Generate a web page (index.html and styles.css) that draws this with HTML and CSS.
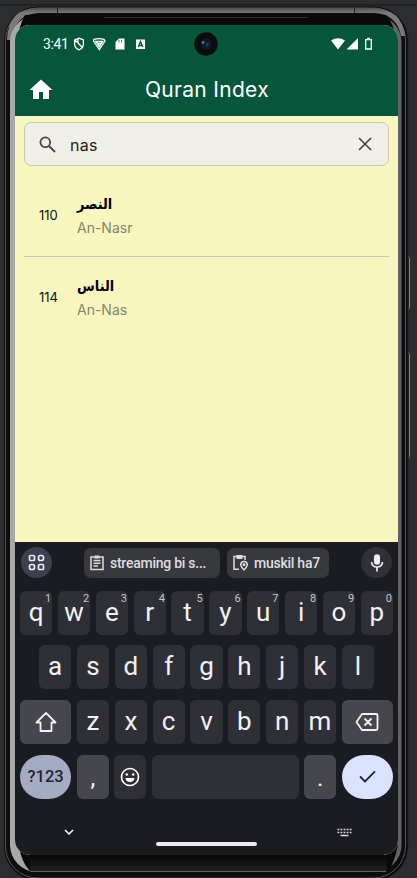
FILE: index.html
```
<!DOCTYPE html>
<html lang="en">
<head>
<meta charset="utf-8">
<title>Quran Index</title>
<link rel="stylesheet" href="styles.css">
</head>
<body>
<div class="stage">
<svg class="frame" width="417" height="878" viewBox="0 0 417 878">
  <defs>
    <linearGradient id="side" x1="0" x2="1"><stop offset="0" stop-color="#aaa"/><stop offset=".3" stop-color="#777"/><stop offset="1" stop-color="#626362"/></linearGradient>
    <linearGradient id="foot" x1="0" y1="0" x2="0" y2="1"><stop offset="0" stop-color="#060606"/><stop offset="1" stop-color="#202020"/></linearGradient>
    <linearGradient id="cap" gradientUnits="userSpaceOnUse" x1="0" y1="7" x2="0" y2="13"><stop offset="0" stop-color="#484848"/><stop offset="1" stop-color="#7a7a7a"/></linearGradient>
  </defs>
  <rect y="4" width="417" height="1.500" fill="#1e1f22"/>
  <rect x="406" y="257" width="3.500" height="52" rx="1.500" fill="#222" stroke="#85857f"/>
  <rect x="406" y="353" width="3.500" height="105" rx="1.500" fill="#222" stroke="#85857f"/>
  <rect x="4" y="6.500" width="404" height="874" rx="34" fill="#0d0d0e"/>
  <rect x="5.500" y="8" width="400" height="870" rx="32" fill="none" stroke="#565653"/>
  <path d="M7 40Q8 8 38 8H374Q402 9 405 36L401 36Q397 14 374 13H38Q15 14 11 40Z" fill="url(#cap)"/>
  <path d="M57.500 8v5M354.500 8v5" stroke="#222"/>
  <rect x="10" y="15" width="391.500" height="857" rx="27" fill="url(#side)"/>
  <path d="M25 15H386Q393 22 395 36H18Q20 24 25 15ZM16 845H398Q394 864 388 871H30Q21 862 19 845Z" fill="#090909"/>
  <rect x="30" y="854" width="357" height="17" fill="url(#foot)"/>
  <path d="M30 871.500H386" stroke="#62625e"/>
  <path d="M104 17.500H308" stroke="#333"/>
  <path d="M408 36V845" stroke="#1d1e20"/>
</svg>
<main class="screen">
  <header class="appbar">
    <div class="status">
      <span class="clock">3:41</span>
      <svg class="st-icons" width="74" height="14" viewBox="0 0 74 14" fill="none" stroke="#fff" stroke-width="1.300">
        <path d="M6 1.200 10.400 3v4Q10.400 11 6 12.800 1.600 11 1.600 7V3ZM2 3l8 8M5 2v4l3 3"/>
        <path d="M21 2.300Q26 .8 31 2.300L32 4 26.300 12.500 20.500 4Z"/><path d="M23 4.500h6.500L26.300 9.500ZM24 6.500h5" stroke-width="1.500"/>
        <path d="M46 1.500h5.500V12.500h-9V5Z" fill="#fff" stroke="none"/><path d="M46 3v2.500M48.500 3v2.500" stroke="#06563c" stroke-width=".8"/>
        <rect x="63" y="2.500" width="9" height="9.500" fill="#fff" stroke="none"/><path d="M65.200 10 67.500 4.500 69.800 10M66 8.500h3" stroke="#06563c"/>
      </svg>
      <svg class="camera" width="24" height="24" viewBox="0 0 24 24"><circle cx="12" cy="12" r="11.700" fill="#0b0c0e"/><circle cx="12" cy="12" r="6" fill="#11151c"/><circle cx="12" cy="12" r="3.500" fill="#10203c"/><circle cx="9" cy="10.500" r="1.200" fill="#76819a"/><circle cx="13.500" cy="12.500" r="1.100" fill="#24588a"/></svg>
      <svg class="signals" width="43" height="14" viewBox="0 0 43 14"><path d="M1 3.500Q8-.8 15 3.500L8 12.500ZM28 1v11.500H16.500Z" fill="#fff"/><path d="M35.700 2.700h5.600v9.300h-5.600Z" fill="none" stroke="#fff" stroke-width="1.300"/><path d="M37 .8h3V3h-3Z" fill="#fff"/></svg>
    </div>
    <div class="titlebar">
      <svg class="home" width="24" height="21" viewBox="0 0 24 21"><path d="M12 .5 23.500 11H20v9h-6v-7h-4v7H4v-9H.5Z" fill="#fff"/></svg>
      <h1>Quran Index</h1>
    </div>
  </header>
  <section class="content">
    <div class="search">
      <svg width="17" height="17" viewBox="0 0 17 17" fill="none" stroke="#49454f" stroke-width="1.800"><circle cx="6.300" cy="6.300" r="4.900"/><path d="m10 10 6 6"/></svg>
      <span>nas</span>
      <svg width="14" height="14" viewBox="0 0 14 14" stroke="#49454f" stroke-width="1.700"><path d="m1 1 12 12M13 1 1 13"/></svg>
    </div>
    <article class="sura"><b>110</b><div><h2 lang="ar" dir="rtl">النصر</h2><p>An-Nasr</p></div></article>
    <article class="sura"><b>114</b><div><h2 lang="ar" dir="rtl">الناس</h2><p>An-Nas</p></div></article>
  </section>
  <section class="keyboard">
    <div class="suggest">
      <span class="round tools"><svg width="17" height="17" viewBox="0 0 17 17" fill="none" stroke="#e9ebf5" stroke-width="1.700"><rect x="1.500" y="1.500" width="5" height="5" rx="1"/><rect x="10.500" y="1.500" width="5" height="5" rx="2"/><rect x="1.500" y="10.500" width="5" height="5" rx="2"/><rect x="10.500" y="10.500" width="5" height="5" rx="1"/></svg></span>
      <span class="chip first"><svg width="14" height="17" viewBox="0 0 14 17" fill="none" stroke="#ddd" stroke-width="1.500"><path d="M1 3h12v12.500H1ZM3.500 6.500h7M3.500 9.300h7M3.500 12h4.500"/><path d="M4.500 1.500h5v3h-5Z" fill="#ddd" stroke="none"/></svg><em>streaming bi s...</em></span>
      <span class="chip next"><svg width="15" height="17" viewBox="0 0 15 17" fill="none" stroke="#ddd" stroke-width="1.500"><path d="M6 15.200H1V2.500h11V6"/><path d="M3.500 1h6v4h-6Z" fill="#ddd" stroke="none"/><path d="M11 15.800Q7.800 12.500 7.800 10.700a3.200 3.200 0 0 1 6.400 0Q14.200 12.500 11 15.800Z"/><circle cx="11" cy="10.700" r=".7"/></svg><em>muskil ha7</em></span>
      <span class="round mic"><svg width="14" height="18" viewBox="0 0 14 18" fill="none" stroke="#eee" stroke-width="1.700"><rect x="4.800" y="1" width="4.400" height="9" rx="2.200" fill="#eee"/><path d="M1.500 8q.5 5 5.500 5t5.500-5M7 13v4.500"/></svg></span>
    </div>
    <div class="row"><span class="key">q<sup>1</sup></span><span class="key">w<sup>2</sup></span><span class="key">e<sup>3</sup></span><span class="key">r<sup>4</sup></span><span class="key">t<sup>5</sup></span><span class="key">y<sup>6</sup></span><span class="key">u<sup>7</sup></span><span class="key">i<sup>8</sup></span><span class="key">o<sup>9</sup></span><span class="key">p<sup>0</sup></span></div>
    <div class="row middle"><span class="key">a</span><span class="key">s</span><span class="key">d</span><span class="key">f</span><span class="key">g</span><span class="key">h</span><span class="key">j</span><span class="key">k</span><span class="key">l</span></div>
    <div class="row"><span class="key wide light"><svg width="22" height="22" viewBox="0 0 22 22" fill="none" stroke="#f2f1f6" stroke-width="1.800" stroke-linejoin="round"><path d="M11 1.800 20.500 11.500H16.500V20h-11v-8.500H1.500Z"/></svg></span><span class="key">z</span><span class="key">x</span><span class="key">c</span><span class="key">v</span><span class="key">b</span><span class="key">n</span><span class="key">m</span><span class="key wide light"><svg width="24" height="20" viewBox="0 0 24 20" fill="none" stroke="#f2f1f6" stroke-width="1.800" stroke-linejoin="round"><path d="M7 2h14q1.500 0 1.500 1.500v13Q22.500 18 21 18H7L1.500 10ZM9.500 6.500l7 7M16.500 6.500l-7 7"/></svg></span></div>
    <div class="row"><span class="key wide symbols">?123</span><span class="key light punct">,</span><span class="key"><svg width="20" height="20" viewBox="0 0 20 20"><circle cx="10" cy="10" r="8.500" fill="none" stroke="#fff" stroke-width="1.600"/><path d="M5.500 11h9Q14 15 10 15t-4.500-4" fill="#fff"/><circle cx="6.800" cy="7.500" r="1.200" fill="#fff"/><circle cx="13.200" cy="7.500" r="1.200" fill="#fff"/></svg></span><span class="key space"></span><span class="key light punct">.</span><span class="key wide enter"><svg width="17" height="13" viewBox="0 0 17 13" fill="none" stroke="#20242e" stroke-width="1.800"><path d="m1 6.500 5 5L16 1.300"/></svg></span></div>
    <div class="nav">
      <svg width="10" height="7" viewBox="0 0 10 7" fill="none" stroke="#fff" stroke-width="1.500"><path d="m1 1 4 4 4-4"/></svg>
      <i></i>
      <svg width="15" height="9" viewBox="0 0 15 9" stroke="#ddd"><path d="M.5 1.500h14M.5 4.500h14" stroke-width="1.500" stroke-dasharray="1.800 1.250"/><path d="M3.500 7.500h8" stroke-width="1.300"/></svg>
    </div>
  </section>
</main>
</div>
</body>
</html>
```
FILE: styles.css
```
*{box-sizing:border-box}
body{margin:0;background:#2b2d31;font-family:Inter,"Liberation Sans",sans-serif}
svg{display:block;flex:none}
.stage{position:relative;width:417px;height:878px;padding:25px 19px 23px 15px;overflow:hidden}
.frame{position:absolute;left:0;top:0}
.screen{position:relative;width:383px;height:830px;border-radius:15px;overflow:hidden;background:#f7f6be;display:flex;flex-direction:column}
.appbar{height:91px;background:#06563c;color:#fff}
.status{height:38px;display:flex;align-items:center;padding-left:28px}
.clock{font:14px/20px Roboto,sans-serif;width:30px;letter-spacing:-.4px;white-space:nowrap}
.camera{margin-left:47px}
.signals{margin-left:112px}
.titlebar{height:53px;display:flex;align-items:center;padding:0 0 1px 14px}
.home{margin-top:1px}
h1{margin:2px 0 0 92px;font-weight:400;font-size:21px;line-height:30px;letter-spacing:.3px;white-space:nowrap}
.content{height:426px;padding:6px 9px 0}
.search{height:44px;border:1px solid #c9c9ae;border-radius:7px;background:#efefe7;display:flex;align-items:center;padding:0 16px 0 14px;color:#1d1b20;font-size:16px}
.search span{margin:1px auto 0 14px;letter-spacing:.3px}
.sura{height:91px;display:flex;border-bottom:1px solid #cac4cf;padding:23px 0 0 15px}
.sura + .sura{height:82px;border:0;padding-top:14px}
.sura b{font-weight:400;font-size:13px;line-height:20px;margin-top:16px;width:38px;color:#111}
h2{margin:0;width:max-content;height:30px;font:bold 15px/30px "DejaVu Sans","Noto Sans",sans-serif;color:#000;white-space:nowrap;transform:scaleX(.86);transform-origin:left}
.sura p{margin:-1px 0 0;font-size:14px;line-height:20px;color:#85856c}
.keyboard{height:313px;background:#1b1c21;padding:5px 5px 0;color:#f2f1f6;font-family:Roboto,sans-serif}
.suggest{display:flex;height:31px;align-items:center;margin-bottom:13px}
.round{width:31px;height:31px;border-radius:50%;display:grid;place-items:center;background:#303136;margin-left:1px}
.round.tools{background:#3d404d}
.mic{margin-left:32px}
.chip{height:30px;border-radius:7px;background:#38393d;display:flex;align-items:center;white-space:nowrap;font-size:14px;font-weight:500;color:#dedde2;padding-left:6px}
.chip em{font-style:normal;margin-left:6px;letter-spacing:-.25px}
.first{width:136px;margin-left:32px}
.next{width:102px;margin-left:7px}
.row{display:flex;gap:5.6px;height:44px;margin-bottom:10.800px}
.row:nth-child(n+3){position:relative;top:-.5px}
.middle{padding:0 19px}
.key{flex:1 1 0;min-width:0;border-radius:6px;background:#2f3035;position:relative;display:flex;align-items:center;justify-content:center;font-size:26px;line-height:32px;padding-bottom:3px}
.key:has(svg){padding:0}
.key sup{position:absolute;right:1px;top:1px;font-size:11px;line-height:13px;color:#c5c5cb;font-weight:400}
.wide{flex:0 0 51.300px}
.light{background:#46474c}
.space{flex:0 0 146.500px}
.symbols{border-radius:22px;background:#a5abc2;color:#222530;font-size:16.500px;font-weight:500;padding:0}
.enter{border-radius:22px;background:#d9e2ff}
.punct{font-size:24px;padding-top:6px}
.nav{display:flex;align-items:center;height:30px;margin-top:18px;padding-left:48px;padding-left:44px}
.nav i{width:101px;height:4px;border-radius:2px;background:#ececef;margin:23px 80px 0 82px}
```
